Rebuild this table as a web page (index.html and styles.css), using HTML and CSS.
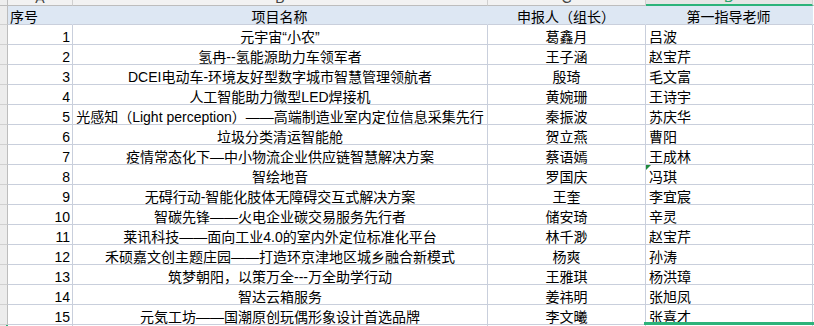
FILE: index.html
```html
<!DOCTYPE html>
<html lang="zh-CN">
<head>
<meta charset="utf-8">
<title>项目名单</title>
<link rel="stylesheet" href="styles.css">
</head>
<body>
<div class="sheet">
  <div class="corner"></div>
  <div class="colhead">A</div>
  <div class="colhead">B</div>
  <div class="colhead">C</div>
  <div class="colhead sel">D</div>
  <div class="colhead"></div>

  <div class="rowhead"></div>
  <div class="cell th">序号</div>
  <div class="cell th center">项目名称</div>
  <div class="cell th center">申报人（组长）</div>
  <div class="cell th center">第一指导老师</div>
  <div class="cell th blank"></div>

  <div class="rowhead"></div><div class="cell num">1</div><div class="cell center">元宇宙“小农”</div><div class="cell center">葛鑫月</div><div class="cell">吕波</div><div class="cell blank"></div>
  <div class="rowhead"></div><div class="cell num">2</div><div class="cell center">氢冉--氢能源助力车领军者</div><div class="cell center">王子涵</div><div class="cell">赵宝芹</div><div class="cell blank"></div>
  <div class="rowhead"></div><div class="cell num">3</div><div class="cell center">DCEI电动车-环境友好型数字城市智慧管理领航者</div><div class="cell center">殷琦</div><div class="cell">毛文富</div><div class="cell blank"></div>
  <div class="rowhead"></div><div class="cell num">4</div><div class="cell center">人工智能助力微型LED焊接机</div><div class="cell center">黄婉珊</div><div class="cell">王诗宇</div><div class="cell blank"></div>
  <div class="rowhead"></div><div class="cell num">5</div><div class="cell center">光感知（Light perception）——高端制造业室内定位信息采集先行</div><div class="cell center">秦振波</div><div class="cell">苏庆华</div><div class="cell blank"></div>
  <div class="rowhead"></div><div class="cell num">6</div><div class="cell center">垃圾分类清运智能舱</div><div class="cell center">贺立燕</div><div class="cell">曹阳</div><div class="cell blank"></div>
  <div class="rowhead"></div><div class="cell num">7</div><div class="cell center">疫情常态化下—中小物流企业供应链智慧解决方案</div><div class="cell center">蔡语嫣</div><div class="cell">王成林</div><div class="cell blank"></div>
  <div class="rowhead"></div><div class="cell num">8</div><div class="cell center">智绘地音</div><div class="cell center">罗国庆</div><div class="cell flag">冯琪</div><div class="cell blank"></div>
  <div class="rowhead"></div><div class="cell num">9</div><div class="cell center">无碍行动-智能化肢体无障碍交互式解决方案</div><div class="cell center">王奎</div><div class="cell">李宜宸</div><div class="cell blank"></div>
  <div class="rowhead"></div><div class="cell num">10</div><div class="cell center">智碳先锋——火电企业碳交易服务先行者</div><div class="cell center">储安琦</div><div class="cell">辛灵</div><div class="cell blank"></div>
  <div class="rowhead"></div><div class="cell num">11</div><div class="cell center">莱讯科技——面向工业4.0的室内外定位标准化平台</div><div class="cell center">林千渺</div><div class="cell">赵宝芹</div><div class="cell blank"></div>
  <div class="rowhead"></div><div class="cell num">12</div><div class="cell center">禾硕嘉文创主题庄园——打造环京津地区城乡融合新模式</div><div class="cell center">杨爽</div><div class="cell">孙涛</div><div class="cell blank"></div>
  <div class="rowhead"></div><div class="cell num">13</div><div class="cell center">筑梦朝阳，以策万全---万全助学行动</div><div class="cell center">王雅琪</div><div class="cell">杨洪璋</div><div class="cell blank"></div>
  <div class="rowhead"></div><div class="cell num">14</div><div class="cell center">智达云箱服务</div><div class="cell center">姜祎明</div><div class="cell">张旭凤</div><div class="cell blank"></div>
  <div class="rowhead"></div><div class="cell num">15</div><div class="cell center">元気工坊——国潮原创玩偶形象设计首选品牌</div><div class="cell center">李文曦</div><div class="cell">张喜才</div><div class="cell blank"></div>

  <div class="rowhead selrow"></div><div class="cell"></div><div class="cell"></div><div class="cell"></div><div class="cell active"></div><div class="cell blank"></div>
</div>
</body>
</html>
```
FILE: styles.css
```css
html, body {
  margin: 0;
  padding: 0;
  background: #ffffff;
  overflow: hidden;
}

body {
  font-family: "Liberation Sans", "Noto Sans CJK SC", sans-serif;
  font-size: 14px;
  color: #000000;
}

.sheet {
  display: grid;
  grid-template-columns: 8px 65px 415px 158px 167px 1fr;
  grid-template-rows: 20px 19px repeat(16, 20px);
  margin-top: -14px;
}

.sheet > div {
  box-sizing: border-box;
  display: flex;
  align-items: flex-end;
  line-height: 14px;
  white-space: nowrap;
  border-right: 1px solid #c9cfdc;
  border-bottom: 1px solid #c9cfdc;
  min-width: 0;
}

.corner {
  background: #eeeeee;
  border-right-color: #bdbdbd !important;
  border-bottom-color: #bdbdbd !important;
}

.colhead {
  background: #f2f2f2;
  color: #444444;
  justify-content: center;
  border-right-color: #d0d0d0 !important;
  border-bottom-color: #bdbdbd !important;
}

.colhead.sel {
  background: #e6e6e6;
  color: #2aa56b;
  border-bottom: 2px solid #2db37a !important;
}

.rowhead {
  background: #ececec;
  border-right-color: #bdbdbd !important;
  border-bottom-color: #d0d0d0 !important;
}

.rowhead.selrow {
  border-right: 2px solid #2db37a !important;
}

.cell {
  padding: 0 3px;
  overflow: visible;
}

.th {
  background: #dde7f3;
  border-right-color: #dde7f3 !important;
  padding-left: 2px;
}

.th.blank {
  background: #ffffff;
  border-right-color: #c9cfdc !important;
}

.center {
  justify-content: center;
}

.num {
  justify-content: flex-end;
  padding-right: 2px;
}

.flag {
  position: relative;
}

.flag::before {
  content: "";
  position: absolute;
  left: 0;
  top: 0;
  border-top: 5px solid #1f8a3c;
  border-right: 5px solid transparent;
}

.active {
  position: relative;
}

.active::before {
  content: "";
  position: absolute;
  left: -2px;
  right: -4px;
  top: -3px;
  height: 3px;
  background: #2db37a;
}
```
